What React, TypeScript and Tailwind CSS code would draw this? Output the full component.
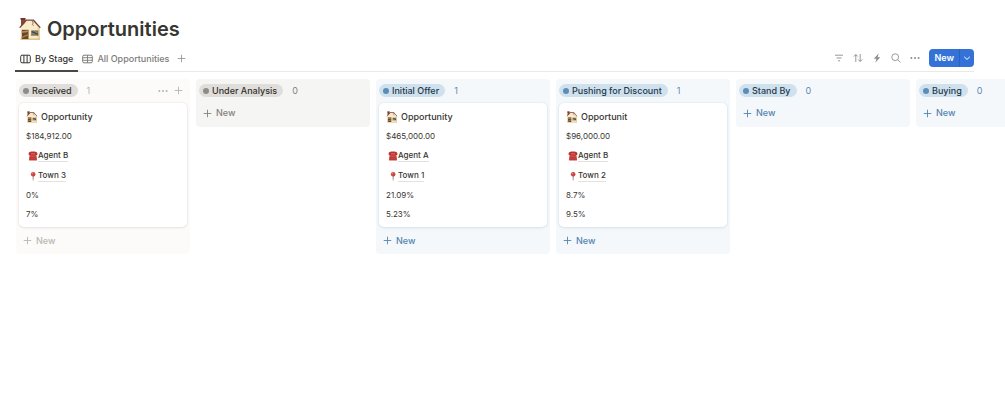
import { clsx } from "clsx";

type Tone = "plain" | "gray" | "blue";

interface Deal {
  title: string;
  price: string;
  agent: string;
  town: string;
  rates: string[];
}

interface Stage {
  name: string;
  tone: Tone;
  deals: Deal[];
  active?: boolean;
}

const stages: Stage[] = [
  {
    name: "Received",
    tone: "plain",
    active: true,
    deals: [
      { title: "Opportunity", price: "$184,912.00", agent: "Agent B", town: "Town 3", rates: ["0%", "7%"] },
    ],
  },
  { name: "Under Analysis", tone: "gray", deals: [] },
  {
    name: "Initial Offer",
    tone: "blue",
    deals: [
      { title: "Opportunity", price: "$465,000.00", agent: "Agent A", town: "Town 1", rates: ["21.09%", "5.23%"] },
    ],
  },
  {
    name: "Pushing for Discount",
    tone: "blue",
    deals: [
      { title: "Opportunit", price: "$96,000.00", agent: "Agent B", town: "Town 2", rates: ["8.7%", "9.5%"] },
    ],
  },
  { name: "Stand By", tone: "blue", deals: [] },
  { name: "Buying", tone: "blue", deals: [] },
];

const tones = {
  plain: {
    column: "bg-[#fcfbf9]",
    pill: "bg-[#dfdedb] text-[#32302c]",
    dot: "bg-[#8e8c88]",
    count: "text-[#b5b3af]",
    add: "text-[#b9b7b3]",
  },
  gray: {
    column: "bg-[#f5f5f3]",
    pill: "bg-[#dfdedb] text-[#32302c]",
    dot: "bg-[#8e8c88]",
    count: "text-[#84827e]",
    add: "text-[#84827e]",
  },
  blue: {
    column: "bg-[#f4f8fb]",
    pill: "bg-[#d0e1ee] text-[#22384a]",
    dot: "bg-[#5b8db8]",
    count: "text-[#5a8bb5]",
    add: "text-[#5485b0]",
  },
};

function HouseIcon({ className }: { className?: string }) {
  return (
    <svg viewBox="0 0 24 24" className={className} aria-hidden="true">
      <path d="M3 1.500h4v7H3z" fill="#8e4436" />
      <path d="M2.500 1h5v1.700h-5z" fill="#6e3229" />
      <path d="M2.500 10.500 9 3.500h7l6 7V23H2.500z" fill="#f8ebc9" />
      <path d="M19.500 8.500V23H22V11z" fill="#ecd6a6" />
      <path d="M2.500 21.500H22V23H2.500z" fill="#e0c28c" />
      <path d="M1.300 10.300 7.500 2.500h8.300l6.900 7.800-.8.900-7-7.400H8.800L2 11.200z" fill="#7b443a" />
      <path d="m14 3.800 1.300 2.200-1 1.200 1.300 1.600" fill="none" stroke="#7d5644" strokeWidth=".8" />
      <path d="M3.800 12.800h6.700v9.200H3.800z" fill="#664529" />
      <path d="m3.600 14.200 7.200-.9V15l-7.200.9z" fill="#b58d57" />
      <path d="m3.600 19.700 7.200-3v1.600l-7.200 3z" fill="#a87f4a" />
      <path d="M13.200 13.400h7.200v4.800h-7.200z" fill="#8f6f4a" />
      <path d="M14 14.200h5.600v3.200H14z" fill="#73858c" />
      <path d="m13.800 14 6.200 2.700v1.200l-6.200-2.700z" fill="#3c4247" />
      <path d="M12.800 18h8v1h-8z" fill="#b9935f" />
    </svg>
  );
}

function PhoneIcon() {
  return (
    <svg viewBox="0 0 20 20" className="size-[10px]" aria-hidden="true">
      <path d="M3.500 5.500h13l1.700 12.200c.1.900-.3 1.500-1.200 1.500H3c-.9 0-1.300-.6-1.200-1.500z" fill="#cf4540" />
      <path d="M1.200 5C1.200 2.200 5 1.200 10 1.200s8.800 1 8.800 3.800v2c0 .6-.4 1-1 1H15c-.6 0-1-.4-1-1V5.500H6V7c0 .6-.4 1-1 1H2.200c-.6 0-1-.4-1-1z" fill="#bb3331" />
      <path d="M6 9.500h8l1 7.500H5z" fill="#ab3031" />
      <path d="M7 10.500h1.500V12H7zm2.300 0h1.500V12H9.300zm2.300 0h1.500V12h-1.500zM7 13.500h1.500V15H7zm2.300 0h1.500V15H9.300zm2.300 0h1.500V15h-1.500z" fill="#e08580" />
    </svg>
  );
}

function PinIcon() {
  return (
    <svg viewBox="0 0 20 20" className="size-[10px]" aria-hidden="true">
      <path d="M9.300 10h2l-.4 9h-1.200z" fill="#85776f" />
      <circle cx="10.300" cy="6.500" r="4.600" fill="#d04640" />
      <circle cx="8.800" cy="5" r="1.300" fill="#ea8c84" />
    </svg>
  );
}

function PlusIcon() {
  return (
    <svg viewBox="0 0 10 10" className="size-[9px]" fill="none" stroke="currentColor" aria-hidden="true">
      <path d="M5 .8v8.400M.8 5h8.400" />
    </svg>
  );
}

function DotsIcon() {
  return (
    <svg viewBox="0 0 10 10" className="size-[10px]" fill="currentColor" aria-hidden="true">
      <circle cx="1.400" cy="5" r="1" />
      <circle cx="5" cy="5" r="1" />
      <circle cx="8.600" cy="5" r="1" />
    </svg>
  );
}

function BoardIcon() {
  return (
    <svg viewBox="0 0 11 10" className="h-[10px] w-[11px]" fill="none" stroke="currentColor" aria-hidden="true">
      <rect x=".7" y="1.200" width="9.600" height="7.600" rx="1.300" />
      <path d="M3.900 1.200v7.600M7.100 1.200v7.600" />
    </svg>
  );
}

function TableIcon() {
  return (
    <svg viewBox="0 0 11 10" className="h-[10px] w-[11px]" fill="none" stroke="currentColor" aria-hidden="true">
      <rect x=".7" y="1.200" width="9.600" height="7.600" rx="1.300" />
      <path d="M.7 3.700h9.600M.7 6.300h9.600M5.500 1.200v7.600" strokeWidth=".9" />
    </svg>
  );
}

const tools = [
  {
    label: "Filter",
    icon: <path d="M1 2.200h8M2.500 5h5M4 7.800h2" />,
  },
  {
    label: "Sort",
    icon: <path d="M2.800 9V1.500M.8 3.500l2-2 2 2M7.200 1v7.500M5.200 6.500l2 2 2-2" />,
  },
  {
    label: "Automations",
    icon: <path d="M6.800.3 1.800 5.700h2.700L3.200 9.800 8.300 4.300H5.600z" fill="currentColor" stroke="none" />,
  },
  {
    label: "Search",
    icon: <path d="M7.600 4.200a3.400 3.400 0 1 1-6.800 0 3.400 3.400 0 0 1 6.800 0zM6.700 6.700 9.400 9.400" />,
  },
];

function DealCard({ deal, tone }: { deal: Deal; tone: Tone }) {
  return (
    <article
      className={clsx(
        "flex flex-col gap-[7px] rounded-[5px] bg-white px-[7px] py-[7px] text-[8px] leading-3 text-[#37352f]",
        tone === "blue"
          ? "shadow-[0_0_0_1px_rgba(60,110,160,0.04),0_1px_3px_rgba(60,110,160,0.12)]"
          : "shadow-[0_0_0_1px_rgba(15,15,15,0.03),0_1px_3px_rgba(15,15,15,0.07)]",
      )}
    >
      <h2 className="flex items-center gap-[3px] text-[9px] leading-[13px] font-medium">
        <HouseIcon className="size-3" />
        {deal.title}
      </h2>
      <p>{deal.price}</p>
      <p className="flex items-center pl-[2px] font-medium">
        <PhoneIcon />
        <a href="#agent" className="border-b border-[#e3e2e0]">{deal.agent}</a>
      </p>
      <p className="flex items-center pl-[2px] font-medium">
        <PinIcon />
        <a href="#town" className="border-b border-[#e3e2e0]">{deal.town}</a>
      </p>
      {deal.rates.map((rate) => (
        <p key={rate}>{rate}</p>
      ))}
    </article>
  );
}

function StageColumn({ stage }: { stage: Stage }) {
  const tone = tones[stage.tone];
  return (
    <section className={clsx("w-[174px] shrink-0 rounded-[4px] px-[3px]", tone.column)}>
      <header className="flex h-6 items-center pb-[1px]">
        <span className={clsx("flex h-[13px] items-center gap-[3px] rounded-full pr-[6px] pl-1 text-[9px] leading-3 font-medium", tone.pill)}>
          <span className={clsx("size-[6px] rounded-full", tone.dot)} />
          {stage.name}
        </span>
        <span className={clsx("ml-[9px] text-[9px]", tone.count)}>{stage.deals.length}</span>
        {stage.active && (
          <span className="ml-auto flex items-center gap-[6px] pr-1 text-[#b5b3af]">
            <button aria-label="Stage options"><DotsIcon /></button>
            <button aria-label="Add to stage"><PlusIcon /></button>
          </span>
        )}
      </header>
      {stage.deals.map((deal) => (
        <DealCard key={deal.price} deal={deal} tone={stage.tone} />
      ))}
      <button
        className={clsx(
          "flex w-full items-center gap-1 pl-1 text-[9px] font-medium",
          stage.deals.length > 0 ? "h-[27px]" : "h-6 pb-1",
          tone.add,
        )}
      >
        <PlusIcon />
        New
      </button>
    </section>
  );
}

export default function App() {
  return (
    <main className="min-h-screen overflow-hidden bg-white pt-[15px] font-['Inter',sans-serif] text-[#37352f]">
      <h1 className="flex h-7 items-center gap-[5px] pl-[18px] text-[20px] leading-7 font-semibold">
        <HouseIcon className="size-6" />
        Opportunities
      </h1>

      <div className="mr-[31px] ml-[15px] flex h-[29px] items-stretch border-b border-[#e9e9e7]">
        <nav className="-mb-px flex text-[9px] font-medium text-[#7d7b77]">
          <button className="flex items-center gap-1 border-b-2 border-[#4a4843] px-[5px] pt-1 text-[#37352f]">
            <BoardIcon />
            By Stage
          </button>
          <button className="flex items-center gap-1 px-1 pt-[2px]">
            <TableIcon />
            All Opportunities
          </button>
          <button aria-label="Add view" className="px-1 pt-[2px] text-[#9b9995]"><PlusIcon /></button>
        </nav>

        <div className="ml-auto flex items-center pt-[2px] text-[#8f8d89]">
          {tools.map((tool) => (
            <button key={tool.label} aria-label={tool.label} className="flex w-[19px] justify-center">
              <svg viewBox="0 0 10 10" className="size-[10px]" fill="none" stroke="currentColor" strokeWidth=".9">
                {tool.icon}
              </svg>
            </button>
          ))}
          <button aria-label="More" className="flex w-[19px] justify-center"><DotsIcon /></button>
          <div className="ml-[5px] flex h-[18px] overflow-hidden rounded-[4px] bg-[#3472d8] text-white">
            <button className="px-[5px] text-[9px] font-semibold">New</button>
            <button aria-label="New options" className="flex w-[15px] items-center justify-center border-l border-[#2b62bd]">
              <svg viewBox="0 0 8 8" className="size-[8px]" fill="none" stroke="currentColor">
                <path d="m1.200 2.800 2.800 2.600 2.800-2.600" />
              </svg>
            </button>
          </div>
        </div>
      </div>

      <div className="mt-[7px] flex items-start gap-[6px] pl-4">
        {stages.map((stage) => (
          <StageColumn key={stage.name} stage={stage} />
        ))}
      </div>
    </main>
  );
}
